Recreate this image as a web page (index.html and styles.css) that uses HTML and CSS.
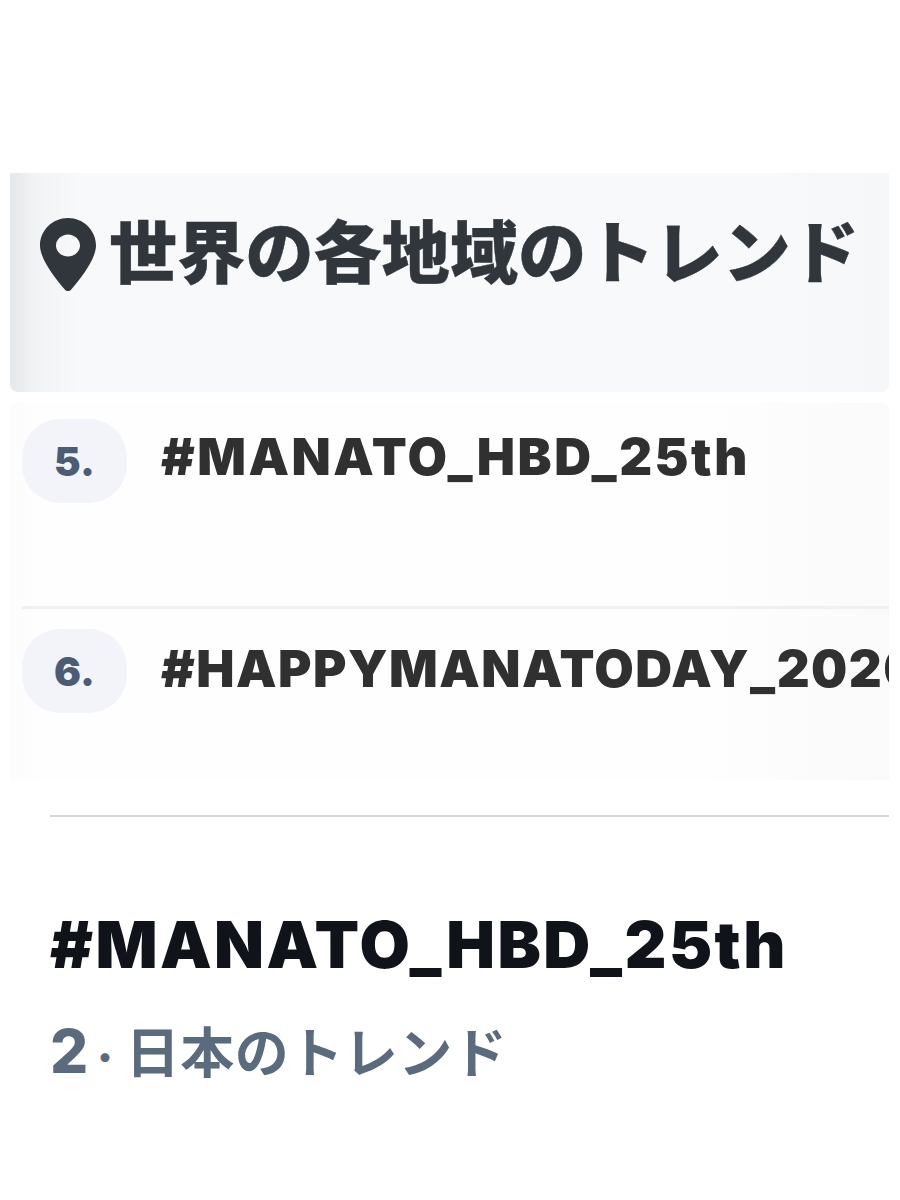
FILE: index.html
```html
<!DOCTYPE html>
<html lang="ja">
<head>
    <meta charset="UTF-8">
    <meta name="viewport" content="width=device-width, initial-scale=1.0">
    <title>世界の各地域のトレンド</title>
    <link rel="stylesheet" href="styles.css">
</head>
<body>
    <!-- Panel Header -->
    <div class="panel-header">
        <svg class="pin-icon" viewBox="0 0 56 74" aria-hidden="true">
            <path fill-rule="evenodd" d="M28 0C12.5 0 0 12.3 0 27.6 0 40 13.5 58.500 24.800 71.500 26.500 73.500 29.500 73.500 31.200 71.500 42.500 58.500 56 40 56 27.600 56 12.300 43.500 0 28 0ZM28 16.500C34.700 16.500 40 21.500 40 27.500 40 33.500 34.700 38.500 28 38.500 21.300 38.500 16 33.500 16 27.500 16 21.500 21.300 16.500 28 16.500Z"/>
        </svg>
        <h2>世界の各地域のトレンド</h2>
    </div>

    <!-- Trend Rows -->
    <div class="trend-list">
        <div class="trend-row">
            <span class="rank">5.</span>
            <span class="tag">#MANATO_HBD_25th</span>
        </div>
        <div class="trend-row">
            <span class="rank">6.</span>
            <span class="tag tag-long">#HAPPYMANATODAY_2020</span>
        </div>
    </div>

    <!-- Trend Detail -->
    <div class="trend-detail">
        <h1>#MANATO_HBD_25th</h1>
        <p><span class="num">2</span><span class="dot">·</span>日本のトレンド</p>
    </div>
</body>
</html>
```

FILE: styles.css
```css
/* Global Styles */
body {
    margin: 0;
    padding: 173px 11px 0 10px;
    background: #fff;
    font-family: 'Inter', 'Noto Sans CJK JP', sans-serif;
}

/* Panel Header */
.panel-header {
    display: flex;
    align-items: flex-start;
    gap: 13px;
    height: 219px;
    padding: 38px 0 0 30px;
    box-sizing: border-box;
    border-radius: 0 0 8px 8px;
    background: linear-gradient(90deg, #e5e8ea 0, #f1f3f5 25px, #f7f9fb 70px, #f7f9fb 760px, #f6f7f9 100%);
}

.pin-icon {
    width: 56px;
    height: 74px;
    margin-top: 7px;
    fill: #31363c;
    flex-shrink: 0;
}

.panel-header h2 {
    margin: 0;
    font-family: 'Noto Sans CJK JP', sans-serif;
    font-size: 68px;
    line-height: 76px;
    font-weight: 900;
    letter-spacing: 0.2px;
    -webkit-text-stroke: 0.4px #31363c;
    color: #31363c;
    white-space: nowrap;
}

/* Trend Rows */
.trend-list {
    margin-top: 11px;
    height: 377px;
    overflow: hidden;
    border-radius: 8px 8px 0 0;
    background: linear-gradient(90deg, #fcfcfd 0, #fefefe 30px, #fefefe 700px, #fafafb 100%);
}

.trend-row {
    display: flex;
    align-items: flex-start;
    gap: 34px;
    height: 203px;
    margin-left: 12px;
    padding-top: 16px;
    box-sizing: border-box;
}

.trend-row + .trend-row {
    height: 174px;
    padding-top: 20px;
    border-top: 3px solid #efeff4;
}

.rank {
    display: flex;
    align-items: center;
    justify-content: center;
    flex-shrink: 0;
    width: 105px;
    height: 84px;
    border-radius: 38px;
    background: #f3f4f9;
    font-size: 40px;
    font-weight: 900;
    color: #4b5c74;
}

.tag {
    font-size: 51px;
    line-height: 76px;
    font-weight: 900;
    letter-spacing: 2.5px;
    color: #303030;
    white-space: nowrap;
}

.tag-long {
    margin-top: 2px;
    letter-spacing: 1.5px;
}

/* Trend Detail */
.trend-detail {
    margin: 35px 0 0 40px;
    padding-top: 88px;
    border-top: 2px solid #d8d8da;
}

.trend-detail h1 {
    margin: 0;
    font-size: 65px;
    line-height: 80px;
    font-weight: 900;
    letter-spacing: 2.4px;
    color: #10141a;
}

.trend-detail p {
    margin: 28px 0 0;
    font-size: 54px;
    line-height: 76px;
    font-weight: 700;
    letter-spacing: 0.5px;
    color: #5a6b7e;
}

.num {
    font-size: 60px;
    font-weight: 800;
}

.dot {
    margin: 0 12px 0 8px;
    font-size: 44px;
    font-weight: 900;
}
```
